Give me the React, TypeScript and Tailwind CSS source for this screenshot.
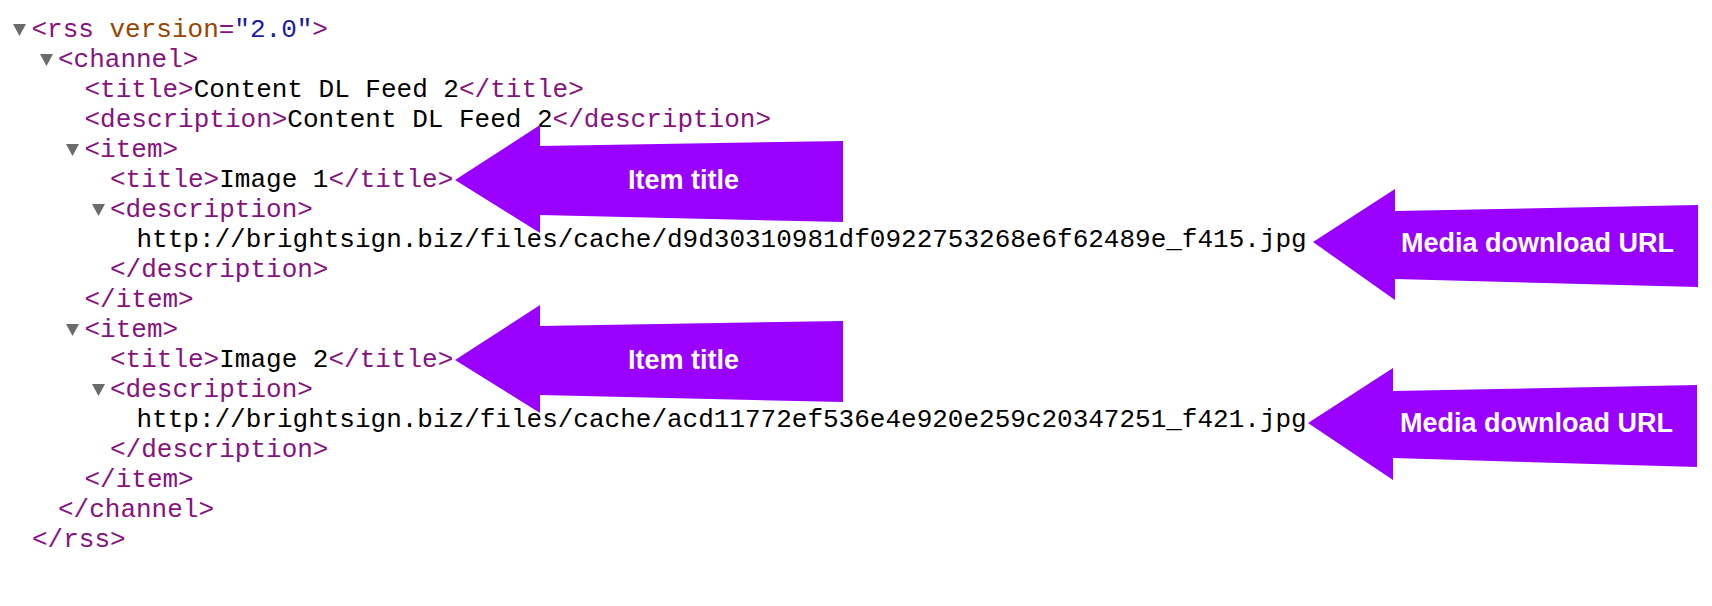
import React from "react";

const TAG = "text-[#881280]";

function Tri() {
  return (
    <svg width="13" height="12" viewBox="0 0 13 12" className="mr-[5.5px] shrink-0">
      <polygon points="0,0 13,0 6.5,12" fill="#6b6b6b" />
    </svg>
  );
}

function Row({
  pl,
  tri,
  children,
}: {
  pl: string;
  tri?: boolean;
  children: React.ReactNode;
}) {
  return (
    <div className={`flex h-[30px] items-center whitespace-pre leading-[30px] ${pl}`}>
      {tri && <Tri />}
      <span>{children}</span>
    </div>
  );
}

function T({ children }: { children: React.ReactNode }) {
  return <span className={TAG}>{children}</span>;
}

export default function App() {
  const url1 = "http://brightsign.biz/files/cache/d9d30310981df0922753268e6f62489e_f415.jpg";
  const url2 = "http://brightsign.biz/files/cache/acd11772ef536e4e920e259c20347251_f421.jpg";
  return (
    <div className="relative h-[606px] w-[1712px] overflow-hidden bg-white text-[26px] text-black [font-family:'Liberation_Mono','Courier_New',monospace]">
      <div className="pt-[15px]">
        <Row pl="pl-[13px]" tri>
          <T>&lt;rss </T>
          <span className="text-[#994500]">version</span>
          <T>=</T>
          <span className="text-[#1a1aa6]">"2.0"</span>
          <T>&gt;</T>
        </Row>
        <Row pl="pl-[39.5px]" tri>
          <T>&lt;channel&gt;</T>
        </Row>
        <Row pl="pl-[84.5px]">
          <T>&lt;title&gt;</T>Content DL Feed 2<T>&lt;/title&gt;</T>
        </Row>
        <Row pl="pl-[84.5px]">
          <T>&lt;description&gt;</T>Content DL Feed 2<T>&lt;/description&gt;</T>
        </Row>
        <Row pl="pl-[66px]" tri>
          <T>&lt;item&gt;</T>
        </Row>
        <Row pl="pl-[110px]">
          <T>&lt;title&gt;</T>Image 1<T>&lt;/title&gt;</T>
        </Row>
        <Row pl="pl-[91.5px]" tri>
          <T>&lt;description&gt;</T>
        </Row>
        <Row pl="pl-[136.5px]">{url1}</Row>
        <Row pl="pl-[110px]">
          <T>&lt;/description&gt;</T>
        </Row>
        <Row pl="pl-[84.5px]">
          <T>&lt;/item&gt;</T>
        </Row>
        <Row pl="pl-[66px]" tri>
          <T>&lt;item&gt;</T>
        </Row>
        <Row pl="pl-[110px]">
          <T>&lt;title&gt;</T>Image 2<T>&lt;/title&gt;</T>
        </Row>
        <Row pl="pl-[91.5px]" tri>
          <T>&lt;description&gt;</T>
        </Row>
        <Row pl="pl-[136.5px]">{url2}</Row>
        <Row pl="pl-[110px]">
          <T>&lt;/description&gt;</T>
        </Row>
        <Row pl="pl-[84.5px]">
          <T>&lt;/item&gt;</T>
        </Row>
        <Row pl="pl-[58px]">
          <T>&lt;/channel&gt;</T>
        </Row>
        <Row pl="pl-[32px]">
          <T>&lt;/rss&gt;</T>
        </Row>
      </div>

      {/* annotation arrows */}
      <svg
        className="pointer-events-none absolute left-0 top-0"
        width="1712"
        height="606"
        viewBox="0 0 1712 606"
      >
        <polygon
          fill="#9900ff"
          points="455,180 540,125 540,146 843,141 843,222 540,215 540,233"
        />
        <polygon
          fill="#9900ff"
          points="455,360 540,305 540,326 843,321 843,402 540,395 540,413"
        />
        <polygon
          fill="#9900ff"
          points="1313,242 1395,189 1395,211 1698,205 1698,287 1395,279 1395,300"
        />
        <polygon
          fill="#9900ff"
          points="1308,423 1393,368 1393,391 1697,385 1697,467 1393,458 1393,480"
        />
      </svg>
      <div className="absolute left-[628px] top-[167px] whitespace-nowrap text-[27px] font-bold leading-[27px] text-white [font-family:'Liberation_Sans',Arial,sans-serif]">
        Item title
      </div>
      <div className="absolute left-[628px] top-[347px] whitespace-nowrap text-[27px] font-bold leading-[27px] text-white [font-family:'Liberation_Sans',Arial,sans-serif]">
        Item title
      </div>
      <div className="absolute left-[1401px] top-[230px] whitespace-nowrap text-[27px] font-bold leading-[27px] text-white [font-family:'Liberation_Sans',Arial,sans-serif]">
        Media download URL
      </div>
      <div className="absolute left-[1400px] top-[410px] whitespace-nowrap text-[27px] font-bold leading-[27px] text-white [font-family:'Liberation_Sans',Arial,sans-serif]">
        Media download URL
      </div>
    </div>
  );
}
